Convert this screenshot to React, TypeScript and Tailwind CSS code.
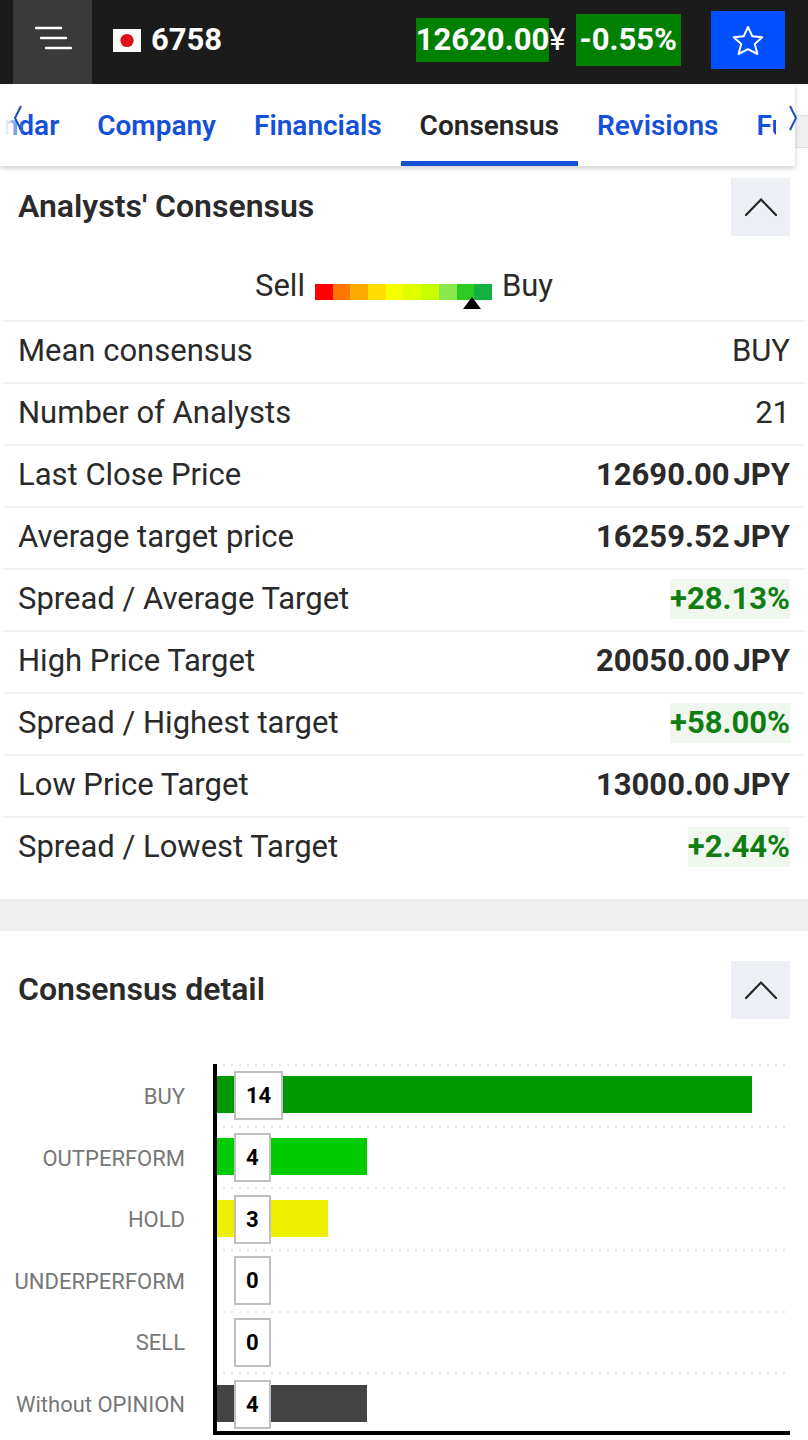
import React from 'react';

interface Tab {
  label: string;
  active?: boolean;
}

interface ConsensusRow {
  label: string;
  value: string;
  type: 'text' | 'price' | 'spread';
}

interface Opinion {
  label: string;
  count: number;
  color: string;
}

const tabs: Tab[] = [
  { label: 'Calendar' },
  { label: 'Company' },
  { label: 'Financials' },
  { label: 'Consensus', active: true },
  { label: 'Revisions' },
  { label: 'Funds' },
];

const consensusRows: ConsensusRow[] = [
  { label: 'Mean consensus', value: 'BUY', type: 'text' },
  { label: 'Number of Analysts', value: '21', type: 'text' },
  { label: 'Last Close Price', value: '12690.00', type: 'price' },
  { label: 'Average target price', value: '16259.52', type: 'price' },
  { label: 'Spread / Average Target', value: '+28.13%', type: 'spread' },
  { label: 'High Price Target', value: '20050.00', type: 'price' },
  { label: 'Spread / Highest target', value: '+58.00%', type: 'spread' },
  { label: 'Low Price Target', value: '13000.00', type: 'price' },
  { label: 'Spread / Lowest Target', value: '+2.44%', type: 'spread' },
];

const opinions: Opinion[] = [
  { label: 'BUY', count: 14, color: 'bg-[#009900]' },
  { label: 'OUTPERFORM', count: 4, color: 'bg-[#00cc00]' },
  { label: 'HOLD', count: 3, color: 'bg-[#eef000]' },
  { label: 'UNDERPERFORM', count: 0, color: 'bg-transparent' },
  { label: 'SELL', count: 0, color: 'bg-transparent' },
  { label: 'Without OPINION', count: 4, color: 'bg-[#444444]' },
];

const CHART_MAX = 15;

const gaugeColors = [
  'bg-[#ff0000]',
  'bg-[#ff7700]',
  'bg-[#ffaa00]',
  'bg-[#ffdd00]',
  'bg-[#f6ff00]',
  'bg-[#e2ff00]',
  'bg-[#c8ff00]',
  'bg-[#8ae84a]',
  'bg-[#2ccb22]',
  'bg-[#14b040]',
];

const TopBar: React.FC = () => (
  <header className="flex h-[84px] bg-[#1b1b1b] pl-[13px] pr-[23px] text-[31px] text-white">
    <button type="button" aria-label="Menu" className="flex w-[79px] items-center justify-center bg-[#3a3a3a] pb-2">
      <svg width="38" height="24" viewBox="0 0 38 24" stroke="white" strokeWidth="2.4" strokeLinecap="round">
        <path d="M2 2h25M7 12h25M12 22h25" />
      </svg>
    </button>
    <div className="flex flex-1 items-center pb-1">
      <svg className="ml-[21px]" width="28" height="23" viewBox="0 0 28 23" role="img" aria-label="Japan">
        <rect width="28" height="23" fill="#fafafa" />
        <circle cx="14" cy="11.5" r="6.6" fill="#dd0f18" />
      </svg>
      <span className="ml-[10px] font-bold leading-9">6758</span>
      <div className="ml-auto flex items-center">
        <span className="bg-[#008000] font-bold leading-[44px]">12620.00</span>
        <span>¥</span>
        <span className="ml-[10px] bg-[#008000] px-1 font-bold leading-[52px]">-0.55%</span>
        <button
          type="button"
          aria-label="Add to watchlist"
          className="ml-[30px] flex h-[58px] w-[74px] items-center justify-center bg-[#0050ff]"
        >
          <svg width="32" height="31" viewBox="0 0 32 31" fill="none" stroke="white" strokeWidth="2" strokeLinejoin="round">
            <path d="M16 2l4.2 9.2 10 1.1-7.4 6.8 2.6 9.9L16 24.2 6.6 29l2.6-9.9-7.4-6.800 10-1.1z" />
          </svg>
        </button>
      </div>
    </div>
  </header>
);

const TabBar: React.FC = () => (
  <div className="bg-[linear-gradient(#ffffff_31px,#e0e0e0_31px,#e0e0e0_32px,#f0f0f0_32px,#f0f0f0_63px,#e0e0e0_63px,#e0e0e0_64px,#ffffff_64px)]">
    <nav className="relative mr-[13px] h-[82px] bg-white shadow-[0_2px_5px_rgba(0,0,0,0.2)]">
      <div className="mr-[19px] h-full overflow-hidden">
        {/* the strip is scrolled, so the first tab runs out on the left */}
        <div className="-ml-[72px] flex h-full">
          {tabs.map((tab) => (
            <a
              key={tab.label}
              href="#"
              aria-current={tab.active ? 'page' : undefined}
              className={
                tab.active
                  ? 'border-b-[5px] border-[#1450d8] px-[19px] text-[28px] font-semibold leading-[84px] text-[#252525]'
                  : 'border-b-[5px] border-transparent px-[19px] text-[28px] font-semibold leading-[84px] text-[#1450d8]'
              }
            >
              {tab.label}
            </a>
          ))}
        </div>
      </div>
      <button
        type="button"
        aria-label="Previous tabs"
        className="absolute left-0 top-0 h-[68px] w-6 bg-gradient-to-r from-white from-20% to-transparent pl-[13px]"
      >
        <svg width="10" height="26" viewBox="0 0 10 26" fill="none" stroke="#1b4fa8" strokeWidth="2">
          <path d="M8 1L2 13l6 12" />
        </svg>
      </button>
      <button type="button" aria-label="Next tabs" className="absolute -right-[3px] top-0 h-[68px]">
        <svg width="10" height="26" viewBox="0 0 10 26" fill="none" stroke="#1b4fc8" strokeWidth="2">
          <path d="M2 1l6 12-6 12" />
        </svg>
      </button>
    </nav>
  </div>
);

const SectionHeader: React.FC<{ title: string }> = ({ title }) => (
  <div className="flex items-start justify-between px-[18px]">
    <h2 className="text-[32px] font-semibold leading-[56px]">{title}</h2>
    <button
      type="button"
      aria-label={`Collapse ${title}`}
      className="flex h-[58px] w-[59px] items-center justify-center bg-[#ecf0f4]"
    >
      <svg width="34" height="20" viewBox="0 0 34 20" fill="none" stroke="#252525" strokeWidth="2.2" strokeLinecap="round">
        <path d="M2 18L17 2.500l15 15.500" />
      </svg>
    </button>
  </div>
);

const ConsensusGauge: React.FC = () => (
  <div className="flex h-[84px] items-center justify-center gap-[10px] pt-4 text-[31px] leading-9">
    <span>Sell</span>
    <div className="relative mt-3 flex w-[177px]">
      {gaugeColors.map((color) => (
        <div key={color} className={`h-4 flex-1 ${color}`} />
      ))}
      <svg className="absolute right-[11px] top-[13px]" width="18" height="12" viewBox="0 0 18 12">
        <path d="M9 0l9 12H0z" />
      </svg>
    </div>
    <span>Buy</span>
  </div>
);

const ConsensusValue: React.FC<{ row: ConsensusRow }> = ({ row }) => {
  if (row.type === 'spread') {
    return <span className="inline-block bg-[#eff7ef] font-bold leading-10 text-[#0f7d12]">{row.value}</span>;
  }
  if (row.type === 'price') {
    return (
      <span className="font-bold">
        {row.value}
        <span className="ml-1">JPY</span>
      </span>
    );
  }
  return <>{row.value}</>;
};

const ConsensusTable: React.FC = () => (
  <div className="px-1">
    <table className="w-full border-collapse text-[31px] leading-10">
      <tbody>
        {consensusRows.map((row) => (
          <tr key={row.label} className="h-[62px] border-t-2 border-[#f0f0f0]">
            <th scope="row" className="p-0 pb-[3px] pl-[14px] text-left align-middle font-normal">
              {row.label}
            </th>
            <td className="p-0 pb-[3px] pr-[14px] text-right align-middle">
              <ConsensusValue row={row} />
            </td>
          </tr>
        ))}
      </tbody>
    </table>
  </div>
);

const OpinionChart: React.FC = () => (
  <div className="flex h-[371px] pr-[18px]">
    <div className="flex w-[213px] flex-col pr-7 pt-[2px] text-right text-[22px] text-[#777777]">
      {opinions.map((opinion) => (
        <div key={opinion.label} className="flex flex-1 items-center justify-end whitespace-nowrap">
          {opinion.label}
        </div>
      ))}
    </div>
    <div className="relative flex flex-1 flex-col pb-px">
      {opinions.map((opinion) => (
        <div key={opinion.label} className="relative flex flex-1 items-center">
          <div className="absolute left-[10px] right-1 top-0 h-[2px] bg-[repeating-linear-gradient(90deg,#e6e6e6_0px,#e6e6e6_2px,transparent_2px,transparent_8px)]" />
          <div className={`h-[37px] ${opinion.color}`} style={{ width: `${(opinion.count / CHART_MAX) * 100}%` }} />
          <span className="absolute left-[21px] mt-[2px] border-2 border-[#bfbfbf] bg-white px-[10px] text-[22px] font-bold leading-[45px] text-black">
            {opinion.count}
          </span>
        </div>
      ))}
      <div className="pointer-events-none absolute inset-0 border-b-4 border-l-4 border-black" />
    </div>
  </div>
);

const App: React.FC = () => {
  return (
    <div className="min-h-screen bg-white font-[Roboto,sans-serif] text-[#2a2a2a]">
      <TopBar />
      <TabBar />
      <main>
        <section className="pb-5 pt-3">
          <SectionHeader title="Analysts' Consensus" />
          <ConsensusGauge />
          <ConsensusTable />
        </section>
        <section className="border-t-[32px] border-[#f0f0f0] pb-1 pt-[30px]">
          <SectionHeader title="Consensus detail" />
          <div className="mt-[45px]">
            <OpinionChart />
          </div>
        </section>
      </main>
    </div>
  );
};

export default App;
